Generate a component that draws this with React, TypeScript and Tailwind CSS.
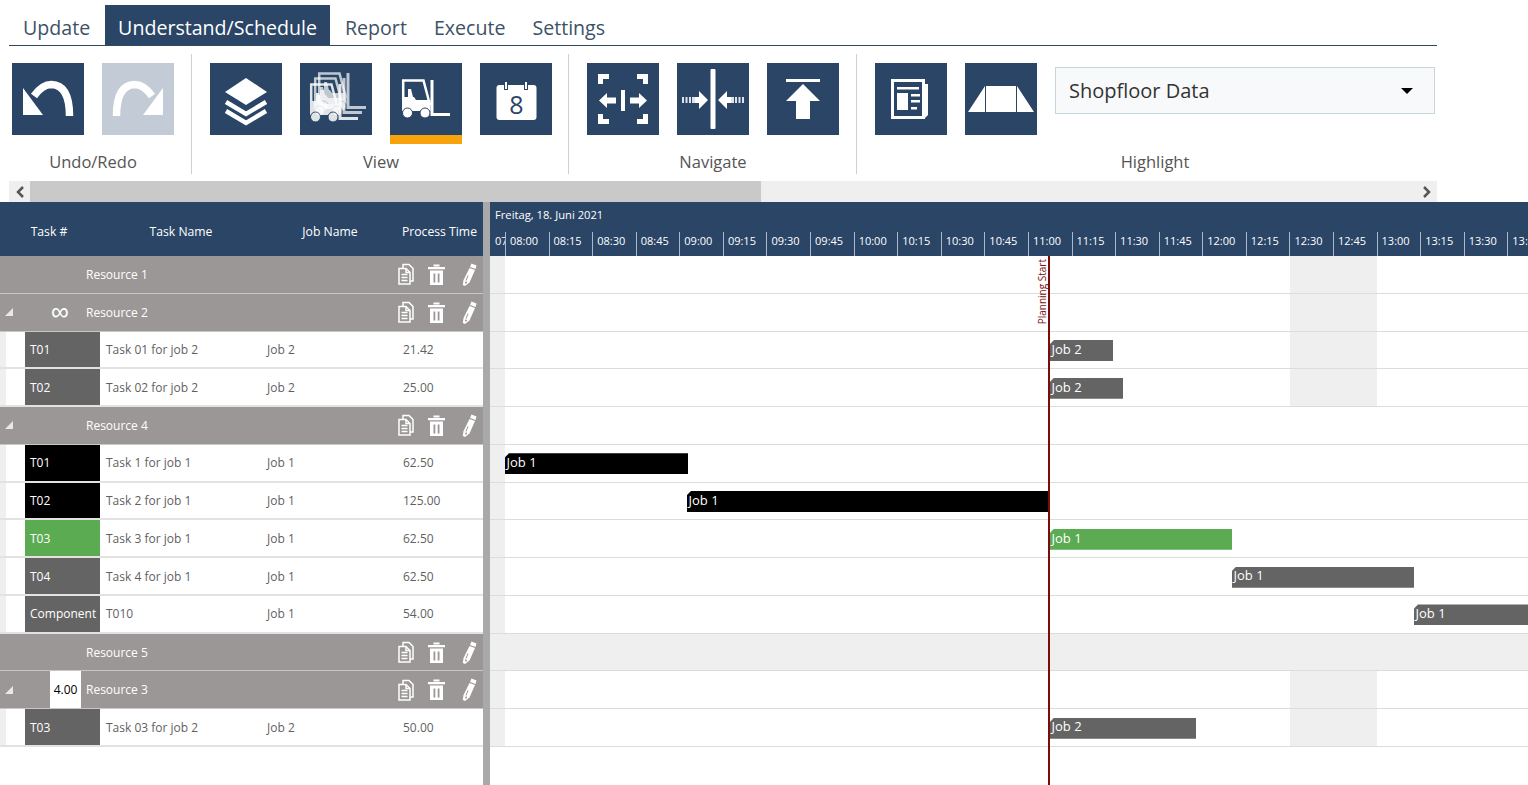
import React from "react";

const TICK = 43.58;
const times = ["08:00","08:15","08:30","08:45","09:00","09:15","09:30","09:45","10:00","10:15","10:30","10:45","11:00","11:15","11:30","11:45","12:00","12:15","12:30","12:45","13:00","13:15","13:30","13:45"];

type Row =
  | { kind: "res"; name: string; mark?: "inf" | "num"; open?: boolean; dim?: boolean; grey?: boolean }
  | { kind: "task"; id: string; name: string; job: string; time: string; color: string; bar?: { x: number; w: number; label: string; color: string } };

const rows: Row[] = [
  { kind: "res", name: "Resource 1", grey: true },
  { kind: "res", name: "Resource 2", mark: "inf", open: true, grey: true },
  { kind: "task", id: "T01", name: "Task 01 for job 2", job: "Job 2", time: "21.42", color: "bg-[#646464]", bar: { x: 1050, w: 63, label: "Job 2", color: "#646464" } },
  { kind: "task", id: "T02", name: "Task 02 for job 2", job: "Job 2", time: "25.00", color: "bg-[#646464]", bar: { x: 1050, w: 73, label: "Job 2", color: "#646464" } },
  { kind: "res", name: "Resource 4", open: true },
  { kind: "task", id: "T01", name: "Task 1 for job 1", job: "Job 1", time: "62.50", color: "bg-black", bar: { x: 505, w: 183, label: "Job 1", color: "#000000" } },
  { kind: "task", id: "T02", name: "Task 2 for job 1", job: "Job 1", time: "125.00", color: "bg-black", bar: { x: 687, w: 363, label: "Job 1", color: "#000000" } },
  { kind: "task", id: "T03", name: "Task 3 for job 1", job: "Job 1", time: "62.50", color: "bg-[#5aab52]", bar: { x: 1050, w: 182, label: "Job 1", color: "#5aab52" } },
  { kind: "task", id: "T04", name: "Task 4 for job 1", job: "Job 1", time: "62.50", color: "bg-[#646464]", bar: { x: 1232, w: 182, label: "Job 1", color: "#646464" } },
  { kind: "task", id: "Component", name: "T010", job: "Job 1", time: "54.00", color: "bg-[#646464]", bar: { x: 1414, w: 114, label: "Job 1", color: "#646464" } },
  { kind: "res", name: "Resource 5", dim: true },
  { kind: "res", name: "Resource 3", mark: "num", open: true, grey: true },
  { kind: "task", id: "T03", name: "Task 03 for job 2", job: "Job 2", time: "50.00", color: "bg-[#646464]", bar: { x: 1050, w: 146, label: "Job 2", color: "#646464" } },
];

const Forklift = ({ dx = 0, dy = 0, o = 1 }: { dx?: number; dy?: number; o?: number }) => (
  <g transform={`translate(${dx} ${dy})`} opacity={o} fill="none" stroke="#fff">
    <path d="M13.200 36V17.500H33.500L40 42" strokeWidth="2.500" />
    <path d="M12 34h12l2 3h14.500v11H12z" fill="#fff" stroke="none" />
    <path d="M18 26h3l2 8h-5z" fill="#fff" stroke="none" />
    <circle cx="17.500" cy="50" r="5" fill="#fff" stroke="#2a4566" strokeWidth="1" />
    <circle cx="35" cy="50" r="5" fill="#fff" stroke="#2a4566" strokeWidth="1" />
    <path d="M42 17v34.500H60" strokeWidth="3" />
  </g>
);

const Icon = ({ children }: { children: React.ReactNode }) => (
  <svg viewBox="0 0 72 72" className="w-[72px] h-[72px]">{children}</svg>
);

const icons: Record<string, React.ReactNode> = {
  undo: (
    <Icon>
      <path d="M57.500 53C57.500 44 57 22 39.500 21.500 32 21.500 27 26 22 33" fill="none" stroke="#fff" strokeWidth="7.500" />
      <path d="M11 25v27h20z" fill="#fff" />
    </Icon>
  ),
  redo: (
    <Icon>
      <path d="M14.500 53C14.500 44 15 22 32.500 21.500 40 21.500 45 26 50 33" fill="none" stroke="#fff" strokeWidth="7.500" />
      <path d="M61 25v27H41z" fill="#fff" />
    </Icon>
  ),
  layers: (
    <Icon>
      <path d="M36 15l21 14-21 13-21-13z" fill="#fff" />
      <path d="M16 39l20 12 20-12M16 48l20 12 20-12" fill="none" stroke="#fff" strokeWidth="4.500" />
    </Icon>
  ),
  forklifts: (
    <Icon>
      <Forklift dx={6} dy={-7} o={0.7} />
      <Forklift dx={2} dy={-2} o={0.7} />
      <Forklift dx={-2} dy={4} o={0.85} />
    </Icon>
  ),
  forklift: (
    <Icon>
      <Forklift />
    </Icon>
  ),
  calendar: (
    <Icon>
      <rect x="16.500" y="22" width="40" height="35" rx="3" fill="#fff" />
      <path d="M26 18v9M46 18v9" stroke="#2a4566" strokeWidth="4" />
      <path d="M26 19v7M46 19v7" stroke="#fff" strokeWidth="2" />
      <text x="36.500" y="51" textAnchor="middle" fontSize="25" fill="#2a4566" fontFamily="'Open Sans', sans-serif">8</text>
    </Icon>
  ),
  fit: (
    <Icon>
      <path d="M13.500 21V13.500H22M50 13.500h8.500V21M13.500 51v7.500H22M50 58.500h8.500V51" fill="none" stroke="#fff" strokeWidth="5" />
      <path d="M34 27h4v21h-4z" fill="#fff" />
      <path d="M12 37.500l8-7.500v4.500h9v6h-9v4.500zM60 37.500l-8-7.500v4.500h-9v6h9v4.500z" fill="#fff" />
    </Icon>
  ),
  collapse: (
    <Icon>
      <rect x="33.500" y="6" width="5" height="60" rx="1" fill="#fff" />
      <path d="M31 37l-9-9v6h-4v6h4v6zM41 37l9-9v6h4v6h-4v6z" fill="#fff" />
      <path d="M5 34h2v6H5zM8.500 34h2v6h-2zM12 34h2v6h-2zM15 34h3v6h-3zM54 34h3v6h-3zM58 34h2v6h-2zM61.500 34h2v6h-2zM65 34h2v6h-2z" fill="#fff" opacity="0.85" />
    </Icon>
  ),
  top: (
    <Icon>
      <rect x="19" y="16" width="34" height="3" fill="#fff" />
      <path d="M36 21l17 17H43v18H29V38H19z" fill="#fff" />
    </Icon>
  ),
  news: (
    <Icon>
      <path d="M17.500 17.500h31v37h-31z" fill="none" stroke="#fff" strokeWidth="3" />
      <path d="M50 21h3v31l-3 3z" fill="#fff" />
      <path d="M22 24h22v2.500H22zM22 30h11v17H22zM36 31h9v2.500h-9zM36 37h9v2.500h-9zM36 44h6v2.500h-6z" fill="#fff" />
    </Icon>
  ),
  trapezoid: (
    <Icon>
      <path d="M3 49l17-26v26zM21 23h30v26H21zM52 23l17 26H52z" fill="#fff" />
    </Icon>
  ),
};

const ToolButton = ({ name, bg = "bg-[#2a4566]", active }: { name: string; bg?: string; active?: boolean }) => (
  <div className="w-[72px] shrink-0">
    <div className={`h-[72px] w-[72px] ${bg}`}>{icons[name]}</div>
    {active && <div className="h-[9px] bg-[#f7a30c]" />}
  </div>
);

const Group = ({ label, children, className }: { label: string; children: React.ReactNode; className: string }) => (
  <div className={`flex flex-col shrink-0 ${className}`}>
    <div className="h-[81px] pt-[9px]">{children}</div>
    <div className="text-center text-[16.500px] leading-[23px] text-[#555] mt-[15px]">{label}</div>
  </div>
);

const Sep = () => <div className="w-px h-[120px] bg-[#d0d0d0] shrink-0" />;

const ResourceIcons = () => (
  <div className="ml-auto flex items-center">
    <svg viewBox="0 0 16 22" className="w-[16px] h-[22px] mr-[14px]" fill="none" stroke="#fff" strokeWidth="1.500">
      <path d="M5 5V1.500h6l4 4V18h-3" />
      <path d="M1 5.500h7l4 4V21H1z" />
      <path d="M8 5.500v4h4" />
      <path d="M3.500 11.500h6M3.500 14.500h6M3.500 17.500h6" />
    </svg>
    <svg viewBox="0 0 17 23" className="w-[17px] h-[23px] mr-[17px]" fill="#fff">
      <path d="M0 4h17v2.200H0zM5.500 1.500h6V3.500h-6z" />
      <path d="M2 7.500h13V22H2zM5.500 10.500v9h1.800v-9zM9.700 10.500v9h1.800v-9z" fillRule="evenodd" />
    </svg>
    <svg viewBox="0 0 15 23" className="w-[15px] h-[23px] mr-[6px]" fill="#fff">
      <path d="M9.500 .5l5 2-1 3.500-5.500-2zM7.500 5l5.500 2L7.500 19.500 3 23 .8 22 1.500 17z" />
      <path d="M4 17.500l2-5" stroke="#9b9796" strokeWidth="1" />
      <circle cx="4" cy="19.500" r="1" fill="#9b9796" />
    </svg>
  </div>
);

const ResourceRow = ({ row }: { row: Extract<Row, { kind: "res" }> }) => (
  <div className="h-[37.770px] flex items-stretch bg-[#9b9796] border-b border-[#c9c6c5] text-white text-[12px]">
    <div className="w-[50px] flex items-center pl-[5px] shrink-0">
      {row.open && <div className="w-0 h-0 border-l-[8px] border-l-transparent border-b-[8px] border-b-[#e8e8e8]" />}
    </div>
    <div className="w-[31px] shrink-0 flex items-center">
      {row.mark === "inf" && <span className="w-[20px] text-center text-[25px] leading-none text-white -mt-[2px] font-['Liberation_Sans']">∞</span>}
      {row.mark === "num" && <div className="w-[31px] h-full bg-white text-black flex items-center justify-center">4.00</div>}
    </div>
    <div className="ml-[5px] pt-[1px] flex items-center">{row.name}</div>
    <ResourceIcons />
  </div>
);

const TaskRow = ({ row }: { row: Extract<Row, { kind: "task" }> }) => (
  <div className="h-[37.770px] flex items-stretch bg-white border-b-2 border-[#e2e2e2] text-[12px] text-[#5f5f5f]">
    <div className="w-[6px] bg-[#efefef] shrink-0" />
    <div className="w-[19px] shrink-0" />
    <div className={`w-[75px] shrink-0 flex items-center pl-[5px] pt-[1px] text-white ${row.color}`}>{row.id}</div>
    <div className="w-[167px] pl-[6px] pt-[1px] flex items-center shrink-0">{row.name}</div>
    <div className="w-[136px] pt-[1px] flex items-center shrink-0">{row.job}</div>
    <div className="pt-[1px] flex items-center">{row.time}</div>
  </div>
);

const GanttRow = ({ row }: { row: Row }) => {
  const grey = row.kind === "res" && row.grey;
  const inGrey = grey || (row.kind === "task" && row.name.endsWith("job 2"));
  const dim = row.kind === "res" && row.dim;
  return (
    <div className={`relative h-[37.770px] border-b border-[#dcdcdc] ${dim ? "bg-[#efefef]" : "bg-white"}`}>
      <div className="absolute left-0 top-0 bottom-0 w-[15px] bg-[#efefef]" />
      {inGrey && <div className="absolute left-[800px] top-0 bottom-0 w-[87px] bg-[#efefef]" />}
      {row.kind === "task" && row.bar && (
        <div
          className="absolute top-[8.500px] h-[21px] flex items-center pl-[1.500px] pb-[2px] text-white text-[13px] overflow-hidden [clip-path:polygon(4px_0,100%_0,100%_100%,0_100%,0_4px)]"
          style={{ left: row.bar.x - 490, width: row.bar.w, backgroundColor: row.bar.color }}
        >
          {row.bar.label}
        </div>
      )}
    </div>
  );
};

export default function App() {
  return (
    <div className="h-[785px] w-[1528px] overflow-hidden bg-white font-['Open_Sans',sans-serif]">
      {/* tabs */}
      <div className="ml-[9px] mt-[5px] w-[1428px] h-[41px] flex items-stretch border-b border-[#2f4a5c] text-[19.600px] text-[#3d5166]">
        <div className="w-[96px] pl-[14px] pt-[6px] flex items-center">Update</div>
        <div className="w-[225px] pt-[6px] bg-[#2a4566] text-white flex items-center justify-center">Understand/Schedule</div>
        <div className="ml-[15px] pt-[6px] flex items-center">Report</div>
        <div className="ml-[27px] pt-[6px] flex items-center">Execute</div>
        <div className="ml-[27px] pt-[6px] flex items-center">Settings</div>
      </div>
      {/* toolbar */}
      <div className="h-[135px] pt-[8px] pl-[12px] flex items-start">
        <Group label="Undo/Redo" className="w-[162px]">
          <div className="flex gap-[18px]">
            <ToolButton name="undo" />
            <ToolButton name="redo" bg="bg-[#c3ccd6]" />
          </div>
        </Group>
        <div className="ml-[17px] mr-[18px]"><Sep /></div>
        <Group label="View" className="w-[342px]">
          <div className="flex gap-[18px]">
            <ToolButton name="layers" />
            <ToolButton name="forklifts" />
            <ToolButton name="forklift" active />
            <ToolButton name="calendar" />
          </div>
        </Group>
        <div className="ml-[16px] mr-[18px]"><Sep /></div>
        <Group label="Navigate" className="w-[252px]">
          <div className="flex gap-[18px]">
            <ToolButton name="fit" />
            <ToolButton name="collapse" />
            <ToolButton name="top" />
          </div>
        </Group>
        <div className="ml-[17px] mr-[18px]"><Sep /></div>
        <Group label="Highlight" className="w-[560px]">
          <div className="flex gap-[18px]">
            <ToolButton name="news" />
            <ToolButton name="trapezoid" />
            <div className="w-[380px] h-[47px] mt-[4px] border border-[#c5d5dc] bg-[#f8f9fa] flex items-center pl-[13px] pr-[21px] text-[20px] text-[#333]">
              <span className="pt-[1px]">Shopfloor Data</span>
              <div className="ml-auto w-0 h-0 border-x-[6px] border-x-transparent border-t-[6px] border-t-black" />
            </div>
          </div>
        </Group>
      </div>
      {/* scrollbar */}
      <div className="ml-[9px] w-[1428px] h-[21px] bg-[#efefef] flex items-center">
        <div className="w-[21px] h-full flex items-center justify-center text-[#555]">
          <svg viewBox="0 0 10 12" className="w-[10px] h-[12px]"><path d="M8 1L3 6l5 5" fill="none" stroke="currentColor" strokeWidth="2.500" /></svg>
        </div>
        <div className="w-[731px] h-full bg-[#c9c9c9]" />
        <div className="ml-auto w-[21px] h-full flex items-center justify-center text-[#555]">
          <svg viewBox="0 0 10 12" className="w-[10px] h-[12px]"><path d="M2 1l5 5-5 5" fill="none" stroke="currentColor" strokeWidth="2.500" /></svg>
        </div>
      </div>
      {/* main */}
      <div className="flex h-[583px]">
        <div className="w-[483px] shrink-0">
          <div className="h-[54px] pt-[6px] bg-[#2a4566] text-white text-[12.200px] flex items-center">
            <div className="w-[98px] text-center">Task #</div>
            <div className="w-[166px] text-center">Task Name</div>
            <div className="w-[132px] text-center">Job Name</div>
            <div className="ml-auto pr-[6px]">Process Time</div>
          </div>
          {rows.map((r, i) => (r.kind === "res" ? <ResourceRow key={i} row={r} /> : <TaskRow key={i} row={r} />))}
        </div>
        <div className="w-[7px] bg-[#a9a9a9] shrink-0" />
        <div className="relative flex-1 overflow-hidden">
          <div className="h-[54px] bg-[#2a4566] text-white text-[11px]">
            <div className="h-[30px] pl-[5px] pt-[5px] text-[11.200px]">Freitag, 18. Juni 2021</div>
            <div className="h-[24px] flex items-stretch">
              <div className="w-[15px] pl-[5px] pb-[6px] shrink-0 overflow-hidden whitespace-nowrap flex items-center">07</div>
              {times.map((t) => (
                <div key={t} className="shrink-0 border-l border-[#a9b8ca] pl-[4px] pb-[6px] flex items-center whitespace-nowrap overflow-hidden" style={{ width: TICK }}>
                  {t}
                </div>
              ))}
            </div>
          </div>
          {rows.map((r, i) => <GanttRow key={i} row={r} />)}
          {/* planning start marker */}
          <div className="absolute left-[558px] top-[54px] bottom-0 w-[2px] bg-[#7a0c0c]" />
          <div className="absolute left-[546px] top-[57px] [writing-mode:vertical-rl] rotate-180 text-[10px] leading-[12px] text-[#7a0c0c] whitespace-nowrap">Planning Start</div>
        </div>
      </div>
    </div>
  );
}
